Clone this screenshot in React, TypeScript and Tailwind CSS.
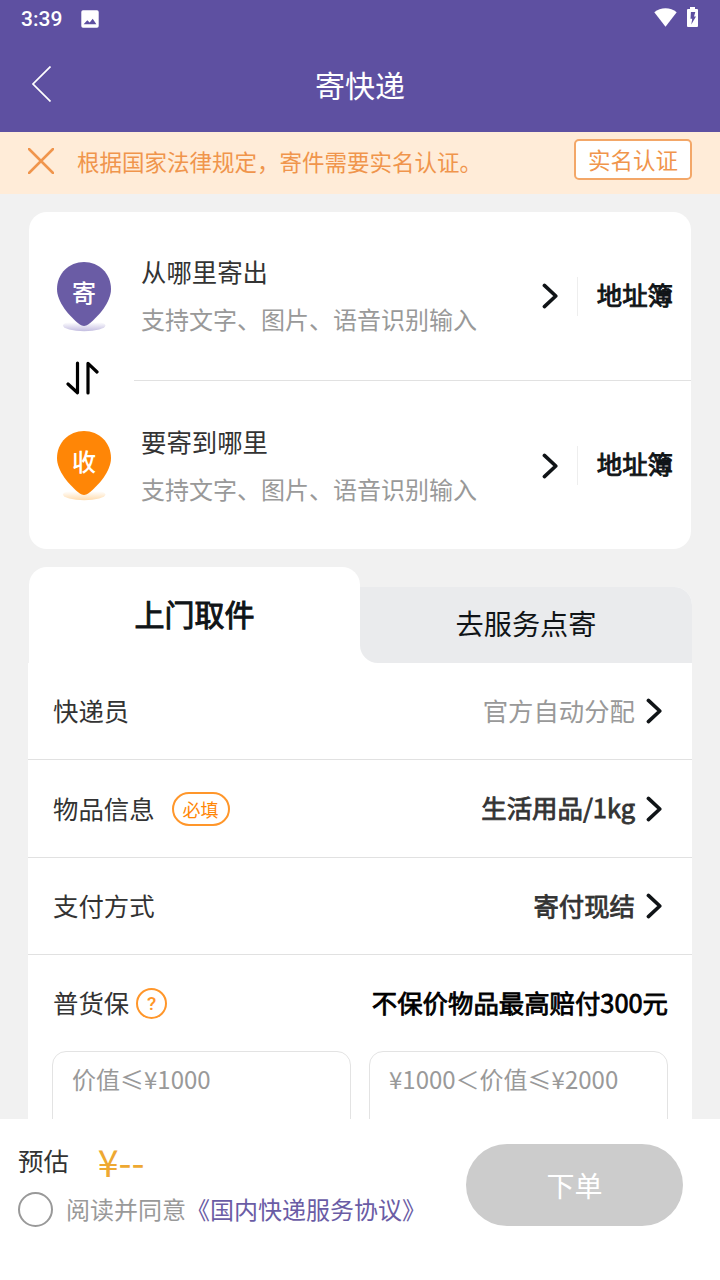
import { useState } from "react";

const places = [
  { id: "from", mark: "寄", title: "从哪里寄出" },
  { id: "to", mark: "收", title: "要寄到哪里" },
];

const placeHint = "支持文字、图片、语音识别输入";
const tiers = ["价值≤¥1000", "¥1000＜价值≤¥2000"];

function StatusBar() {
  return (
    <div className="flex h-9 items-center pl-[21px] pr-[22px] text-white">
      <span className="mt-px font-[Roboto] text-[21px] font-medium leading-9">3:39</span>
      <svg className="ml-[19px] mt-px size-[18px]" viewBox="0 0 18 18">
        <path
          fill="currentColor"
          fillRule="evenodd"
          d="M2 .3h14A1.7 1.7 0 0 1 17.7 2v14a1.7 1.7 0 0 1-1.7 1.7H2A1.7 1.7 0 0 1 .3 16V2A1.7 1.7 0 0 1 2 .3ZM2.6 14.3h12.8L11.7 8.8 8.7 12.5 6.3 10.2Z"
        />
      </svg>
      <svg className="mb-0.5 ml-auto h-[19px] w-[23px]" viewBox="0 0 23 19">
        <path fill="currentColor" d="M.3 4.3C6.5-1 16.5-1 22.7 4.3L11.5 18.7Z" />
      </svg>
      <svg className="mb-0.5 ml-2.5 h-5 w-[11px]" viewBox="0 0 11 20">
        <path
          fill="currentColor"
          fillRule="evenodd"
          d="M3 0h5v2h2a1 1 0 0 1 1 1v16a1 1 0 0 1-1 1H1a1 1 0 0 1-1-1V3a1 1 0 0 1 1-1h2ZM3.9 5 3.5 11.8h1.7L4.3 17.5 9 9.6H7L8.3 5Z"
        />
      </svg>
    </div>
  );
}

function Chevron() {
  return (
    <svg className="h-[26px] w-4 shrink-0 text-[#101417]" viewBox="0 0 16 26" fill="none">
      <path
        d="M2.4 2.4 13.8 13 2.4 23.6"
        stroke="currentColor"
        strokeWidth="3.6"
        strokeLinecap="round"
        strokeLinejoin="round"
      />
    </svg>
  );
}

function Pin({ mark, from }: { mark: string; from: boolean }) {
  const fill = from ? "#6a5ca5" : "#ff8606";
  const shade = from ? "#c3bde0" : "#ffdcae";
  return (
    <div className="relative mt-px h-[70px] w-[54px] shrink-0">
      <svg className="size-full" viewBox="0 0 54 70">
        <defs>
          <linearGradient id={`shade-${mark}`} x1="0" y1="0" x2="0" y2="1">
            <stop offset="0.2" stopColor={shade} stopOpacity="0" />
            <stop offset="1" stopColor={shade} />
          </linearGradient>
        </defs>
        <ellipse cx="27.2" cy="63.6" rx="21.2" ry="5.6" fill={`url(#shade-${mark})`} />
        <path
          fill={fill}
          d="M27 0C42 0 54 11.6 54 27c0 13-12 27-22.5 35.3-3.2 2.3-5.8 2.3-9 0C12 54 0 40 0 27 0 11.6 12 0 27 0Z"
        />
      </svg>
      <span className="absolute inset-x-0 top-3 text-center text-[24px] font-medium leading-9 text-white">
        {mark}
      </span>
    </div>
  );
}

function PlaceRow({ mark, title, from }: { mark: string; title: string; from: boolean }) {
  return (
    <div className="flex items-center pl-7 pr-[18px]">
      <Pin mark={mark} from={from} />
      <div className="-mt-0.5 ml-[30px] grow whitespace-nowrap leading-[47px]">
        <p className="text-[25.4px] text-[#333]">{title}</p>
        <p className="text-[24px] text-[#999]">{placeHint}</p>
      </div>
      <Chevron />
      <div className="ml-[19px] h-[39px] w-px bg-[#eee]" />
      <button className="-mt-1 ml-[19px] whitespace-nowrap text-[25.4px] text-[#101417] [-webkit-text-stroke:0.9px]">
        地址簿
      </button>
    </div>
  );
}

function Row({ label, children }: { label: React.ReactNode; children: React.ReactNode }) {
  return (
    <div className="flex h-full items-center justify-between pl-[25px] pr-[30px] text-[25.4px] text-[#333]">
      <div className="-mt-0.5 flex items-center">{label}</div>
      <div className="flex items-center">{children}</div>
    </div>
  );
}

export default function App() {
  const [agreed, setAgreed] = useState(false);

  return (
    <div className="flex h-[1280px] w-[720px] flex-col overflow-hidden bg-[#f1f1f1] font-['Noto_Sans_CJK_SC',sans-serif]">
      <header className="h-[132px] shrink-0 bg-[#5e50a1]">
        <StatusBar />
        <div className="grid h-24 grid-cols-[1fr_auto_1fr] items-center">
          <svg className="ml-8 h-9 w-[19px]" viewBox="0 0 19 36" fill="none">
            <path d="M18.5.5 1 18 18.5 35.5" stroke="white" strokeWidth="1.7" />
          </svg>
          <h1 className="-mt-px text-[30px] leading-[44px] text-white">寄快递</h1>
        </div>
      </header>

      <div className="flex h-[62px] shrink-0 items-start bg-[#ffecd8] pl-7 pr-[28px] text-[22.5px] text-[#f0954c]">
        <svg className="mt-4 size-[26px]" viewBox="0 0 26 26" fill="none">
          <path d="M1 1 25 25M25 1 1 25" stroke="currentColor" strokeWidth="2.5" strokeLinecap="round" />
        </svg>
        <p className="ml-[23px] mt-[11px] grow leading-9">根据国家法律规定，寄件需要实名认证。</p>
        <button className="mt-[7px] h-[41px] w-[118px] rounded-[5px] border-2 border-[#f3a768] bg-white pb-0.5 leading-[36px]">
          实名认证
        </button>
      </div>

      <main className="min-h-0 grow overflow-hidden px-7 pt-[18px]">
        <section className="mx-px grid h-[337px] grid-rows-[148px_40px_149px] rounded-[18px] bg-white">
          <div className="grid pt-5">
            <PlaceRow mark={places[0].mark} title={places[0].title} from />
          </div>
          <div className="flex items-center">
            <svg className="-mt-1 ml-[37px] h-[34px] w-[33px]" viewBox="0 0 33 34" fill="none">
              <path
                d="M2 23 11.5 31.7V2M22 32V2.3L31 11"
                stroke="black"
                strokeWidth="3.2"
                strokeLinecap="round"
                strokeLinejoin="round"
              />
            </svg>
            <div className="ml-[35px] mt-px h-px grow bg-[#e1e1e1]" />
          </div>
          <div className="grid pb-[18px]">
            <PlaceRow mark={places[1].mark} title={places[1].title} from={false} />
          </div>
        </section>

        <section className="mt-[18px]">
          <div className="flex items-end">
            <div className="ml-px h-24 w-[331px] rounded-t-[18px] bg-white pt-[23px] text-center text-[30px] leading-[46px] text-[#101417] [-webkit-text-stroke:1px]">
              上门取件
            </div>
            {/* white shows through under the rounded bottom-left corner */}
            <div className="h-[76px] grow rounded-tr-[18px] bg-white">
              <div className="h-full rounded-bl-[18px] rounded-tr-[18px] bg-[#eaebed] text-center text-[28.2px] leading-[72px] text-[#101417]">
                去服务点寄
              </div>
            </div>
          </div>

          <div className="grid h-[600px] grid-rows-[97px_98px_97px_96px_1fr] bg-white">
            <div className="border-b border-[#e1e1e1]">
              <Row label="快递员">
                <span className="-mt-0.5 mr-[11px] text-[#999]">官方自动分配</span>
                <Chevron />
              </Row>
            </div>
            <div className="border-b border-[#e1e1e1] pt-px">
              <Row
                label={
                  <>
                    物品信息
                    <span className="ml-[17px] mt-[3px] h-[34px] w-[58px] rounded-full border-2 border-[#ff962a] text-center text-[18px] leading-[31px] text-[#ff8606]">
                      必填
                    </span>
                  </>
                }
              >
                <span className="-mt-1 mr-[11px] [-webkit-text-stroke:0.8px]">生活用品/1kg</span>
                <Chevron />
              </Row>
            </div>
            <div className="border-b border-[#e1e1e1]">
              <Row label="支付方式">
                <span className="-mt-0.5 mr-[11px] [-webkit-text-stroke:0.8px]">寄付现结</span>
                <Chevron />
              </Row>
            </div>
            <div className="-mr-px">
              <Row
                label={
                  <>
                    普货保
                    <span className="ml-[7px] mt-[3px] size-[31px] rounded-full border-2 border-[#ff962a] text-center font-[Roboto] text-[19px] font-medium leading-[27px] text-[#ff962a]">
                      ?
                    </span>
                  </>
                }
              >
                <span className="-mr-[5px] -mt-0.5 text-black [-webkit-text-stroke:0.8px]">
                  不保价物品最高赔付300元
                </span>
              </Row>
            </div>
            <div className="grid grid-cols-2 gap-[18px] px-6">
              {tiers.map((tier) => (
                <div
                  key={tier}
                  className="rounded-[14px] border-[1.5px] border-[#e3e3e3] pl-[19px] pt-[9px] text-[24px] leading-9 text-[#999]"
                >
                  {tier}
                </div>
              ))}
            </div>
          </div>
        </section>
      </main>

      <footer className="flex h-[161px] shrink-0 items-start justify-between bg-white pl-[18px] pr-[37px]">
        <div>
          <div className="flex h-[66px] items-center pt-4 text-[#333]">
            <span className="text-[25.4px] leading-9">预估</span>
            <span className="ml-[29px] mt-0.5 text-[37.5px] leading-9 text-[#eea832]">¥--</span>
          </div>
          <label className="mt-[7px] flex items-center text-[24px] leading-9 text-[#999]">
            <input
              type="checkbox"
              checked={agreed}
              onChange={(e) => setAgreed(e.target.checked)}
              className="mr-[13px] size-[35px] appearance-none rounded-full border-2 border-[#999] checked:bg-[#6a5ca5]"
            />
            <span className="-mt-0.5">阅读并同意</span>
            <span className="-mt-0.5 text-[#6a5ca5]">《国内快递服务协议》</span>
          </label>
        </div>
        <button className="mt-[25px] h-[82px] w-[217px] rounded-full bg-[#ccc] pb-px text-[28px] text-white">
          下单
        </button>
      </footer>
    </div>
  );
}
